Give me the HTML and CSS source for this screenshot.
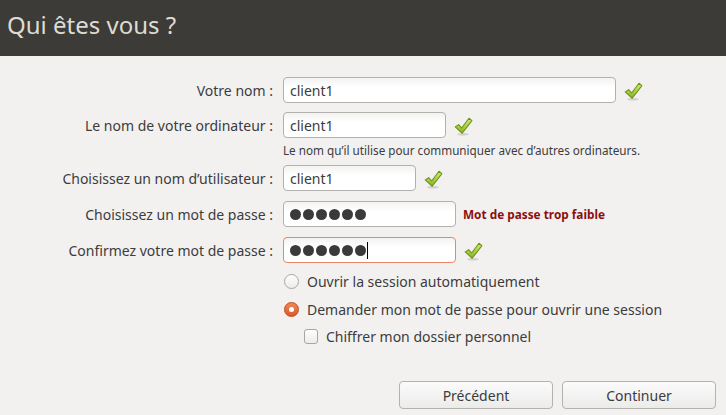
FILE: index.html
```html
<!DOCTYPE html>
<html lang="fr">
<head>
<meta charset="utf-8">
<link rel="stylesheet" href="styles.css">
</head>
<body>
<header class="titlebar"><h1>Qui êtes vous ?</h1></header>
<main class="form">
  <div class="row r1">
    <label class="lbl">Votre nom :</label>
    <div class="field"><div class="input w-long">client1</div><svg class="check" viewBox="0 0 18 18"><use href="#chk"/></svg></div>
  </div>
  <div class="row r2">
    <label class="lbl">Le nom de votre ordinateur :</label>
    <div class="field"><div class="input w-mid">client1</div><svg class="check" viewBox="0 0 18 18"><use href="#chk"/></svg></div>
  </div>
  <div class="hint">Le nom qu’il utilise pour communiquer avec d’autres ordinateurs.</div>
  <div class="row r3">
    <label class="lbl">Choisissez un nom d’utilisateur :</label>
    <div class="field"><div class="input w-short">client1</div><svg class="check" viewBox="0 0 18 18"><use href="#chk"/></svg></div>
  </div>
  <div class="row r4">
    <label class="lbl">Choisissez un mot de passe :</label>
    <div class="field"><div class="input w-pass"><span class="dots"><i></i><i></i><i></i><i></i><i></i><i></i></span></div><span class="weak">Mot de passe trop faible</span></div>
  </div>
  <div class="row r5">
    <label class="lbl">Confirmez votre mot de passe :</label>
    <div class="field"><div class="input w-pass focus"><span class="dots"><i></i><i></i><i></i><i></i><i></i><i></i></span><span class="caret"></span></div><svg class="check" viewBox="0 0 18 18"><use href="#chk"/></svg></div>
  </div>
  <div class="opts">
    <div class="opt o1"><span class="radio"></span>Ouvrir la session automatiquement</div>
    <div class="opt o2"><span class="radio on"></span>Demander mon mot de passe pour ouvrir une session</div>
    <div class="opt o3"><span class="box"></span>Chiffrer mon dossier personnel</div>
  </div>
  <div class="buttons">
    <button class="btn">Précédent</button>
    <button class="btn">Continuer</button>
  </div>
</main>
<svg width="0" height="0" class="defs">
  <defs>
    <linearGradient id="g" x1="0" y1="0" x2="0" y2="1">
      <stop offset="0" stop-color="#d2ec7a"/>
      <stop offset="1" stop-color="#86b41e"/>
    </linearGradient>
    <g id="chk">
      <ellipse cx="8.5" cy="16.4" rx="5.5" ry="1.3" fill="#000" opacity="0.13"/>
      <path d="M1.2 9.4 L4.4 7.2 L7.2 10.4 L14.2 1.2 L17 3.4 L7.8 15.4 Z" fill="url(#g)" stroke="#6d9214" stroke-width="1" stroke-linejoin="round"/>
    </g>
  </defs>
</svg>
</body>
</html>
```
FILE: styles.css
```css
* { box-sizing: border-box; }
html, body { margin: 0; padding: 0; }
body {
  width: 726px;
  height: 415px;
  overflow: hidden;
  background: #f2f1f0;
  font-family: "Noto Sans", "DejaVu Sans", sans-serif;
  font-size: 14px;
  color: #3c3c3c;
}
.defs { position: absolute; }
.titlebar {
  height: 56px;
  background: #3c3b37;
  display: flex;
  align-items: center;
  padding-left: 7px;
}
.titlebar h1 {
  margin: 0;
  font-weight: normal;
  font-size: 24px;
  color: #dfdbd2;
  margin-top: -8px;
}
.form { padding-top: 21px; }
.row {
  display: grid;
  grid-template-columns: 273px 1fr;
  column-gap: 10px;
  align-items: center;
  height: 26px;
}
.r2 { margin-top: 9px; }
.r3 { margin-top: 0; }
.r4, .r5 { margin-top: 10px; }
.lbl { text-align: right; white-space: nowrap; }
.field { display: flex; align-items: center; }
.input {
  height: 26px;
  border: 1px solid #b3b1ad;
  border-radius: 4px;
  background: linear-gradient(#f3f3f2, #ffffff 40%, #ffffff);
  font-size: 14px;
  padding-left: 6px;
  display: flex;
  align-items: center;
  color: #3c3c3c;
}
.input.focus { border-color: #e9866a; }
.w-long { width: 333px; }
.w-mid { width: 163px; }
.w-short { width: 133px; }
.w-pass { width: 173px; }
.check { width: 19px; height: 19px; margin-left: 8px; margin-top: 2px; }
.hint {
  margin-left: 283px;
  height: 27px;
  font-size: 11.7px;
  padding-top: 4px;
}
.dots { display: flex; gap: 2px; }
.dots i { width: 11px; height: 11px; border-radius: 50%; background: #3a3a3a; display: block; }
.caret { width: 1px; height: 17px; background: #000; margin-left: 1px; }
.weak {
  margin-left: 7px;
  font-size: 11.8px;
  font-weight: bold;
  color: #8c0f0f;
}
.opts { margin-left: 284px; margin-top: 4px; }
.opt { display: flex; align-items: center; height: 28px; font-size: 14px; }
.o3 { margin-left: 20px; height: 26px; }
.radio {
  width: 15px; height: 15px; border-radius: 50%;
  border: 1px solid #a7a6a3;
  background: linear-gradient(#fdfdfd, #ececeb);
  margin-right: 8px;
  display: flex; align-items: center; justify-content: center;
}
.radio.on {
  border-color: #bf4a1d;
  background: linear-gradient(#f08a5c, #d7582a);
}
.radio.on::after { content: ""; width: 5px; height: 5px; border-radius: 50%; background: #fff; }
.box {
  width: 14px; height: 15px; border-radius: 3px;
  border: 1px solid #a7a6a3;
  background: linear-gradient(#fdfdfd, #ececeb);
  margin-right: 8px;
}
.buttons {
  display: flex;
  justify-content: flex-end;
  gap: 9px;
  padding-right: 10px;
  margin-top: 32px;
}
.btn {
  width: 154px;
  height: 28px;
  border: 1px solid #b4b2ae;
  border-radius: 4px;
  background: linear-gradient(#fbfbfb, #ebebea);
  font-family: inherit;
  font-size: 14px;
  color: #3c3c3c;
}
```
